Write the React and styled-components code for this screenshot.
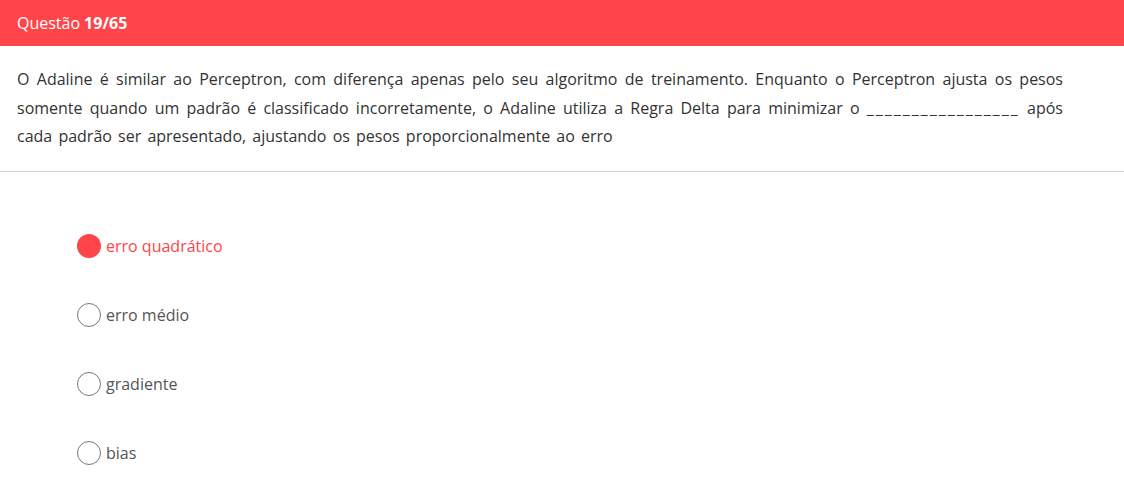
import React, { useState } from 'react';
import styled, { createGlobalStyle } from 'styled-components';

const GlobalStyle = createGlobalStyle`
  body {
    margin: 0;
    background: #fff;
    font-family: "Open Sans", "Noto Sans", sans-serif;
  }
`;

const Header = styled.div`
  height: 46px;
  background: #ff444a;
  color: #fff;
  display: flex;
  align-items: center;
  padding: 0 17px;
  font-size: 16px;
  b {
    font-weight: 700;
    margin-left: 4px;
  }
`;

const Statement = styled.p`
  margin: 0;
  padding: 19px 61px 20px 17px;
  font-size: 16px;
  line-height: 28.5px;
  word-spacing: 2px;
  color: #333;
  text-align: justify;
  border-bottom: 1px solid #d2d2d2;
`;

const Blank = styled.span`
  letter-spacing: 2px;
`;

const Options = styled.div`
  display: flex;
  flex-direction: column;
  gap: 44px;
  padding: 62px 0 0 77px;
`;

const Option = styled.label`
  display: flex;
  align-items: center;
  gap: 5px;
  height: 25px;
  font-size: 16px;
  cursor: pointer;
  color: ${(p) => (p.$selected ? '#ff444a' : '#555')};
`;

const Radio = styled.span`
  width: 24px;
  height: 24px;
  border-radius: 50%;
  box-sizing: border-box;
  border: ${(p) => (p.$selected ? 'none' : '1px solid #777')};
  background: ${(p) => (p.$selected ? '#ff444a' : '#fff')};
`;

const answers = ['erro quadrático', 'erro médio', 'gradiente', 'bias'];

export default function App() {
  const [selected, setSelected] = useState(0);
  return (
    <>
      <GlobalStyle />
      <Header>
        Questão <b>19/65</b>
      </Header>
      <Statement>
        O Adaline é similar ao Perceptron, com diferença apenas pelo seu algoritmo de treinamento.
        Enquanto o Perceptron ajusta os pesos somente quando um padrão é classificado incorretamente,
        o Adaline utiliza a Regra Delta para minimizar o <Blank>_________________</Blank> após cada
        padrão ser apresentado, ajustando os pesos proporcionalmente ao erro
      </Statement>
      <Options>
        {answers.map((a, i) => (
          <Option key={a} $selected={i === selected} onClick={() => setSelected(i)}>
            <Radio $selected={i === selected} />
            {a}
          </Option>
        ))}
      </Options>
    </>
  );
}
